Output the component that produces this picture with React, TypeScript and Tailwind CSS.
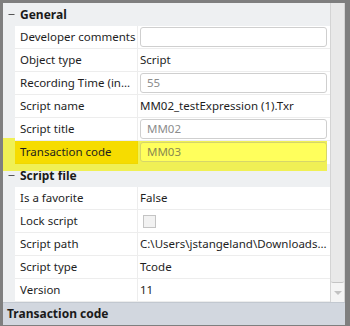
import { Minus } from "lucide-react"

type Row = {
    label: string
    value?: string
    input?: string
    check?: boolean
    hl?: boolean
}

const general: Row[] = [
    { label: "Developer comments", input: "" },
    { label: "Object type", value: "Script" },
    { label: "Recording Time (in...", input: "55" },
    { label: "Script name", value: "MM02_testExpression (1).Txr" },
    { label: "Script title", input: "MM02" },
    { label: "Transaction code", input: "MM03", hl: true },
]

const scriptFile: Row[] = [
    { label: "Is a favorite", value: "False" },
    { label: "Lock script", check: true },
    { label: "Script path", value: "C:\\Users\\jstangeland\\Downloads..." },
    { label: "Script type", value: "Tcode" },
    { label: "Version", value: "11" },
]

function Header({ title }: { title: string }) {
    return (
        <div className="flex h-[23px] shrink-0 items-center bg-[#eef0f2]">
            <div className="flex w-[17px] justify-center">
                <Minus size={9} strokeWidth={2} className="text-[#222]" />
            </div>
            <span className="text-[12px] font-bold text-[#1a1a1a]">{title}</span>
        </div>
    )
}

function PropRow({ row }: { row: Row }) {
    return (
        <div className="relative flex h-[23px] shrink-0">
            {row.hl && (
                <div className="absolute left-[-5px] right-[3px] top-[-3px] bottom-[-7px] z-10 bg-[#f0f055]"></div>
            )}
            <div className="w-[12px] bg-[#eef0f2]"></div>
            <div className={"relative z-20 flex w-[123px] items-center border-b border-r px-[5px] " + (row.hl ? "border-[#f0d800] bg-[#f6dc00]" : "border-[#ededed] bg-white")}>
                <span className="whitespace-nowrap text-[#1e1e1e]">{row.label}</span>
            </div>
            <div className={"relative z-20 flex flex-1 items-center border-b pl-[2px] pr-[3px] " + (row.hl ? "border-transparent bg-transparent" : "border-[#ededed] bg-white")}>
                {row.input !== undefined && (
                    <div className={"flex h-[20px] flex-1 items-center rounded-[3px] border px-[6px] " + (row.hl ? "border-[#d6d66a] bg-[#ffff5c] text-[#8a8a50]" : "border-[#cfcfcf] bg-white text-[#8c8c8c]")}>
                        {row.input}
                    </div>
                )}
                {row.value !== undefined && (
                    <span className="whitespace-nowrap text-[#1e1e1e]">{row.value}</span>
                )}
                {row.check && (
                    <div className="ml-[3px] h-[13px] w-[13px] border border-[#c4c4c4] bg-[#f2f2f2]"></div>
                )}
            </div>
        </div>
    )
}

export default function App() {
    return (
        <div className="h-[326px] w-[350px] bg-white text-[11.5px]" style={{ fontFamily: '"Segoe UI", "Noto Sans", sans-serif' }}>
            <div className="flex h-full flex-col border-b border-l-[3px] border-r-[5px] border-t-[3px] border-[#7f7f7f]">
                <div className="flex h-[299px] shrink-0">
                    <div className="flex flex-1 flex-col overflow-hidden">
                        <Header title="General" />
                        {general.map((r) => (
                            <PropRow key={r.label} row={r} />
                        ))}
                        <Header title="Script file" />
                        {scriptFile.map((r) => (
                            <PropRow key={r.label} row={r} />
                        ))}
                    </div>
                    {/* scrollbar */}
                    <div className="flex w-[15px] flex-col border-l border-r border-[#d4d4d4] bg-[#f4f4f4]">
                        <div className="h-[280px] rounded-b-[2px] border-b border-[#c4c4c4] bg-[#e9e9e9]"></div>
                        <div className="flex flex-1 items-center justify-center">
                            <div className="h-0 w-0 border-l-[4px] border-r-[4px] border-t-[4px] border-l-transparent border-r-transparent border-t-[#c2c2c2]"></div>
                        </div>
                    </div>
                </div>
                <div className="flex h-[23px] shrink-0 items-center border-t border-[#c2c8d0] bg-[#d2d7df] px-[4px]">
                    <span className="text-[12px] font-bold text-[#1a1a1a]">Transaction code</span>
                </div>
            </div>
        </div>
    )
}
